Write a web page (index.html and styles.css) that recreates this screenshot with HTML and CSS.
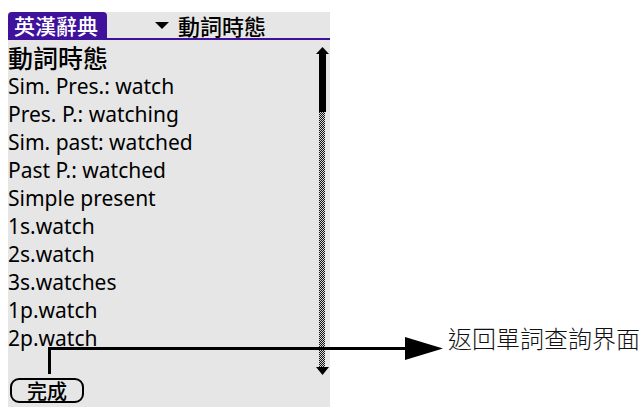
FILE: index.html
```html
<!DOCTYPE html>
<html lang="zh-Hant">
<head>
    <title>英漢辭典</title>
    <link rel="stylesheet" href="styles.css">
</head>
<body>
    <div class="page">
    <div class="screen">
        <div class="titlebar">
            <div class="tab">英漢辭典</div>
            <div class="popup"><span class="tri"></span>動詞時態</div>
        </div>
        <div class="content">
            <div class="list">
                <div class="head">動詞時態</div>
                <div class="row">Sim. Pres.: watch</div>
                <div class="row">Pres. P.: watching</div>
                <div class="row">Sim. past: watched</div>
                <div class="row">Past P.: watched</div>
                <div class="row">Simple present</div>
                <div class="row">1s.watch</div>
                <div class="row">2s.watch</div>
                <div class="row">3s.watches</div>
                <div class="row">1p.watch</div>
                <div class="row">2p.watch</div>
            </div>
            <div class="scroll">
                <svg width="15" height="330" viewBox="0 0 15 330">
                    <defs>
                        <pattern id="dots" width="2" height="2" patternUnits="userSpaceOnUse">
                            <rect width="2" height="2" fill="#d8d8d8"/>
                            <rect width="1" height="1" fill="#111"/>
                            <rect x="1" y="1" width="1" height="1" fill="#111"/>
                        </pattern>
                    </defs>
                    <polygon points="1,8 14,8 7.5,1" fill="#000"/>
                    <rect x="4" y="8" width="7" height="58" fill="#000"/>
                    <rect x="4" y="66" width="6" height="255" fill="url(#dots)"/>
                    <polygon points="1,321 14,321 7.5,329" fill="#000"/>
                </svg>
            </div>
        </div>
        <div class="footer">
            <div class="done">完成</div>
        </div>
    </div>
    </div>

    <div class="callout">
        <svg width="640" height="407" viewBox="0 0 640 407">
            <polyline points="49.5,374 49.5,348.5 407,348.5" fill="none" stroke="#000" stroke-width="3"/>
            <polygon points="405,337 443,348.5 405,360" fill="#000"/>
        </svg>
        <span class="label">返回單詞查詢界面</span>
    </div>
</body>
</html>
```

FILE: styles.css
```css
html, body {
    margin: 0;
    background: #ffffff;
    width: 640px;
    height: 407px;
    overflow: hidden;
}
.page {
    padding: 12px 0 0 8px;
}
.screen {
    background: #e6e6e6;
    width: 322px;
    height: 395px;
    display: flex;
    flex-direction: column;
    font-family: "Noto Sans", "Noto Sans CJK TC", sans-serif;
    color: #000;
}
.titlebar {
    display: flex;
    align-items: center;
    height: 26px;
    border-bottom: 2px solid #40129c;
}
.tab {
    width: 93px;
    height: 26px;
    padding-left: 6px;
    background: #40129c;
    color: #fff;
    border-radius: 4px 4px 0 0;
    font-family: "Noto Sans CJK TC", sans-serif;
    font-size: 21px;
    font-weight: 500;
    line-height: 26px;
}
.popup {
    display: flex;
    align-items: center;
    margin-left: 48px;
    font-family: "Noto Sans CJK TC", sans-serif;
    font-size: 22px;
    font-weight: 500;
    line-height: 26px;
}
.tri {
    width: 0;
    height: 0;
    border-left: 7px solid transparent;
    border-right: 7px solid transparent;
    border-top: 7px solid #000;
    margin-right: 9px;
}
.content {
    display: flex;
    height: 336px;
}
.list {
    flex: 1;
    padding-top: 2px;
}
.head {
    font-family: "Noto Sans CJK TC", sans-serif;
    font-size: 25px;
    font-weight: 500;
    line-height: 30px;
}
.row {
    font-size: 21px;
    line-height: 28px;
    white-space: nowrap;
}
.scroll {
    width: 15px;
    padding-top: 6px;
}
.scroll svg {
    display: block;
}
.footer {
    padding: 2px 0 0 2px;
}
.done {
    width: 70px;
    height: 21px;
    border: 2px solid #000;
    border-radius: 9px;
    text-align: center;
    font-family: "Noto Sans CJK TC", sans-serif;
    font-size: 20px;
    font-weight: 500;
    line-height: 21px;
}
.callout {
    position: absolute;
    left: 0;
    top: 0;
    width: 640px;
    height: 407px;
    pointer-events: none;
}
.callout svg {
    position: absolute;
    left: 0;
    top: 0;
}
.label {
    position: absolute;
    left: 448px;
    top: 322px;
    font-family: "Noto Sans CJK TC", sans-serif;
    font-size: 24px;
    line-height: 32px;
    font-weight: 300;
    color: #111;
    white-space: nowrap;
}
```
